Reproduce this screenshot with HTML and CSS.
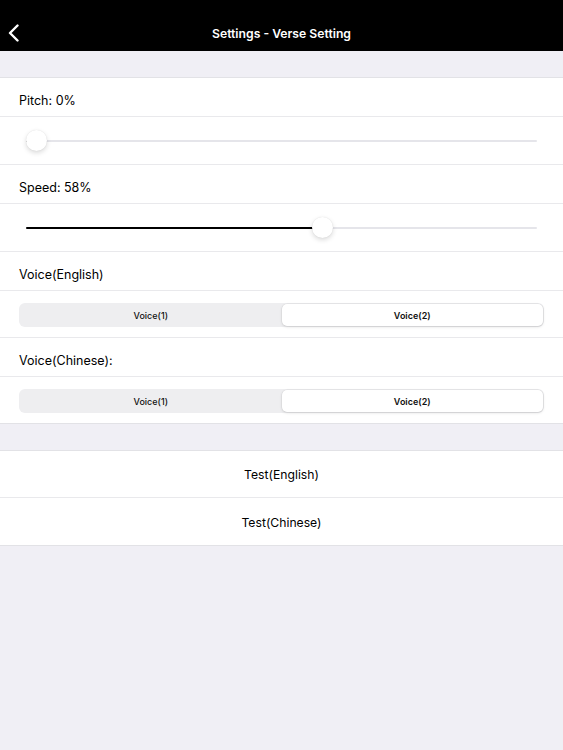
FILE: index.html
```html
<!DOCTYPE html>
<html>
<head>
  <meta charset="utf-8">
  <meta name="viewport" content="width=device-width, initial-scale=1, shrink-to-fit=no">
  <title>Settings - Verse Setting</title>
  <link rel="stylesheet" href="styles.css">
</head>
<body class="app">
<div class="navbar">
  <a class="nav-back" href="#">
    <svg width="14" height="18" viewBox="0 0 14 18">
      <path d="M10.5 1.5 L3 9 L10.5 16.5" fill="none" stroke="#fff" stroke-width="2.4" stroke-linecap="round" stroke-linejoin="round"/>
    </svg>
  </a>
  <div class="nav-title">Settings - Verse Setting</div>
</div>

<div class="spacer"></div>

<div class="group">
  <div class="row row-label">Pitch: 0%</div>
  <div class="row row-slider">
    <div class="slider">
      <div class="slider-fill" style="width: calc((100% - 21px) * 0 + 10px)"></div>
      <div class="slider-thumb" style="left: calc((100% - 21px) * 0)"></div>
    </div>
  </div>

  <div class="row row-label">Speed: 58%</div>
  <div class="row row-slider">
    <div class="slider">
      <div class="slider-fill" style="width: calc((100% - 21px) * 0.583 + 10px)"></div>
      <div class="slider-thumb" style="left: calc((100% - 21px) * 0.583)"></div>
    </div>
  </div>

  <div class="row row-label">Voice(English)</div>
  <div class="row row-segment">
    <div class="segmented">
      <div class="segment">Voice(1)</div>
      <div class="segment active">Voice(2)</div>
    </div>
  </div>

  <div class="row row-label">Voice(Chinese):</div>
  <div class="row row-segment last">
    <div class="segmented">
      <div class="segment">Voice(1)</div>
      <div class="segment active">Voice(2)</div>
    </div>
  </div>
</div>

<div class="spacer"></div>

<div class="group">
  <div class="row row-button">Test(English)</div>
  <div class="row row-button last">Test(Chinese)</div>
</div>
</body>
</html>
```

FILE: styles.css
```css
body {
  margin: 0;
  background: #f0eff5;
  font-family: "Inter", "Roboto", "Liberation Sans", sans-serif;
  color: #000;
  width: 563px;
  min-height: 750px;
}

.navbar {
  height: 51px;
  background: #000;
  display: flex;
  align-items: center;
  justify-content: center;
  position: relative;
}

.nav-back {
  position: absolute;
  left: 7px;
  top: 24px;
  display: block;
  height: 18px;
}

.nav-title {
  color: #fff;
  font-size: 12.2px;
  font-weight: 600;
  padding-top: 15px;
}

.spacer {
  height: 26px;
}

.group {
  background: #fff;
  border-top: 1px solid #e2e2e6;
  border-bottom: 1px solid #e2e2e6;
}

.row {
  border-bottom: 1px solid #e9e9ec;
  box-sizing: border-box;
}

.row.last {
  border-bottom: none;
}

.row-label {
  height: 39px;
  display: flex;
  align-items: center;
  padding: 7px 19px 0;
  font-size: 12.5px;
}

.row-slider {
  height: 48px;
  display: flex;
  align-items: center;
  padding: 0 26px;
}

.slider {
  position: relative;
  flex: 1;
  height: 2px;
  background: #e5e5ea;
  border-radius: 1px;
}

.slider-fill {
  height: 2px;
  background: #000;
  border-radius: 1px;
}

.slider-thumb {
  position: absolute;
  top: -10px;
  width: 21px;
  height: 21px;
  border-radius: 50%;
  background: #fff;
  box-shadow: 0 2px 5px rgba(0, 0, 0, 0.15), 0 0 1px rgba(0, 0, 0, 0.12);
}

.row-segment {
  height: 47px;
  display: flex;
  align-items: center;
  padding: 2px 19px 0;
}

.row-segment.last {
  height: 46px;
}

.segmented {
  flex: 1;
  height: 24px;
  background: #eeeef0;
  border-radius: 6px;
  display: flex;
  padding: 1px;
  box-sizing: border-box;
}

.segment {
  flex: 1;
  display: flex;
  align-items: center;
  justify-content: center;
  font-size: 9px;
  font-weight: 500;
  color: #111;
  border-radius: 5px;
}

.segment.active {
  background: #fff;
  font-weight: 600;
  box-shadow: 0 1px 3px rgba(0, 0, 0, 0.12), 0 0 0 0.5px rgba(0, 0, 0, 0.06);
}

.row-button {
  height: 47px;
  display: flex;
  align-items: center;
  justify-content: center;
  padding-top: 1px;
  font-size: 12.2px;
}
```
